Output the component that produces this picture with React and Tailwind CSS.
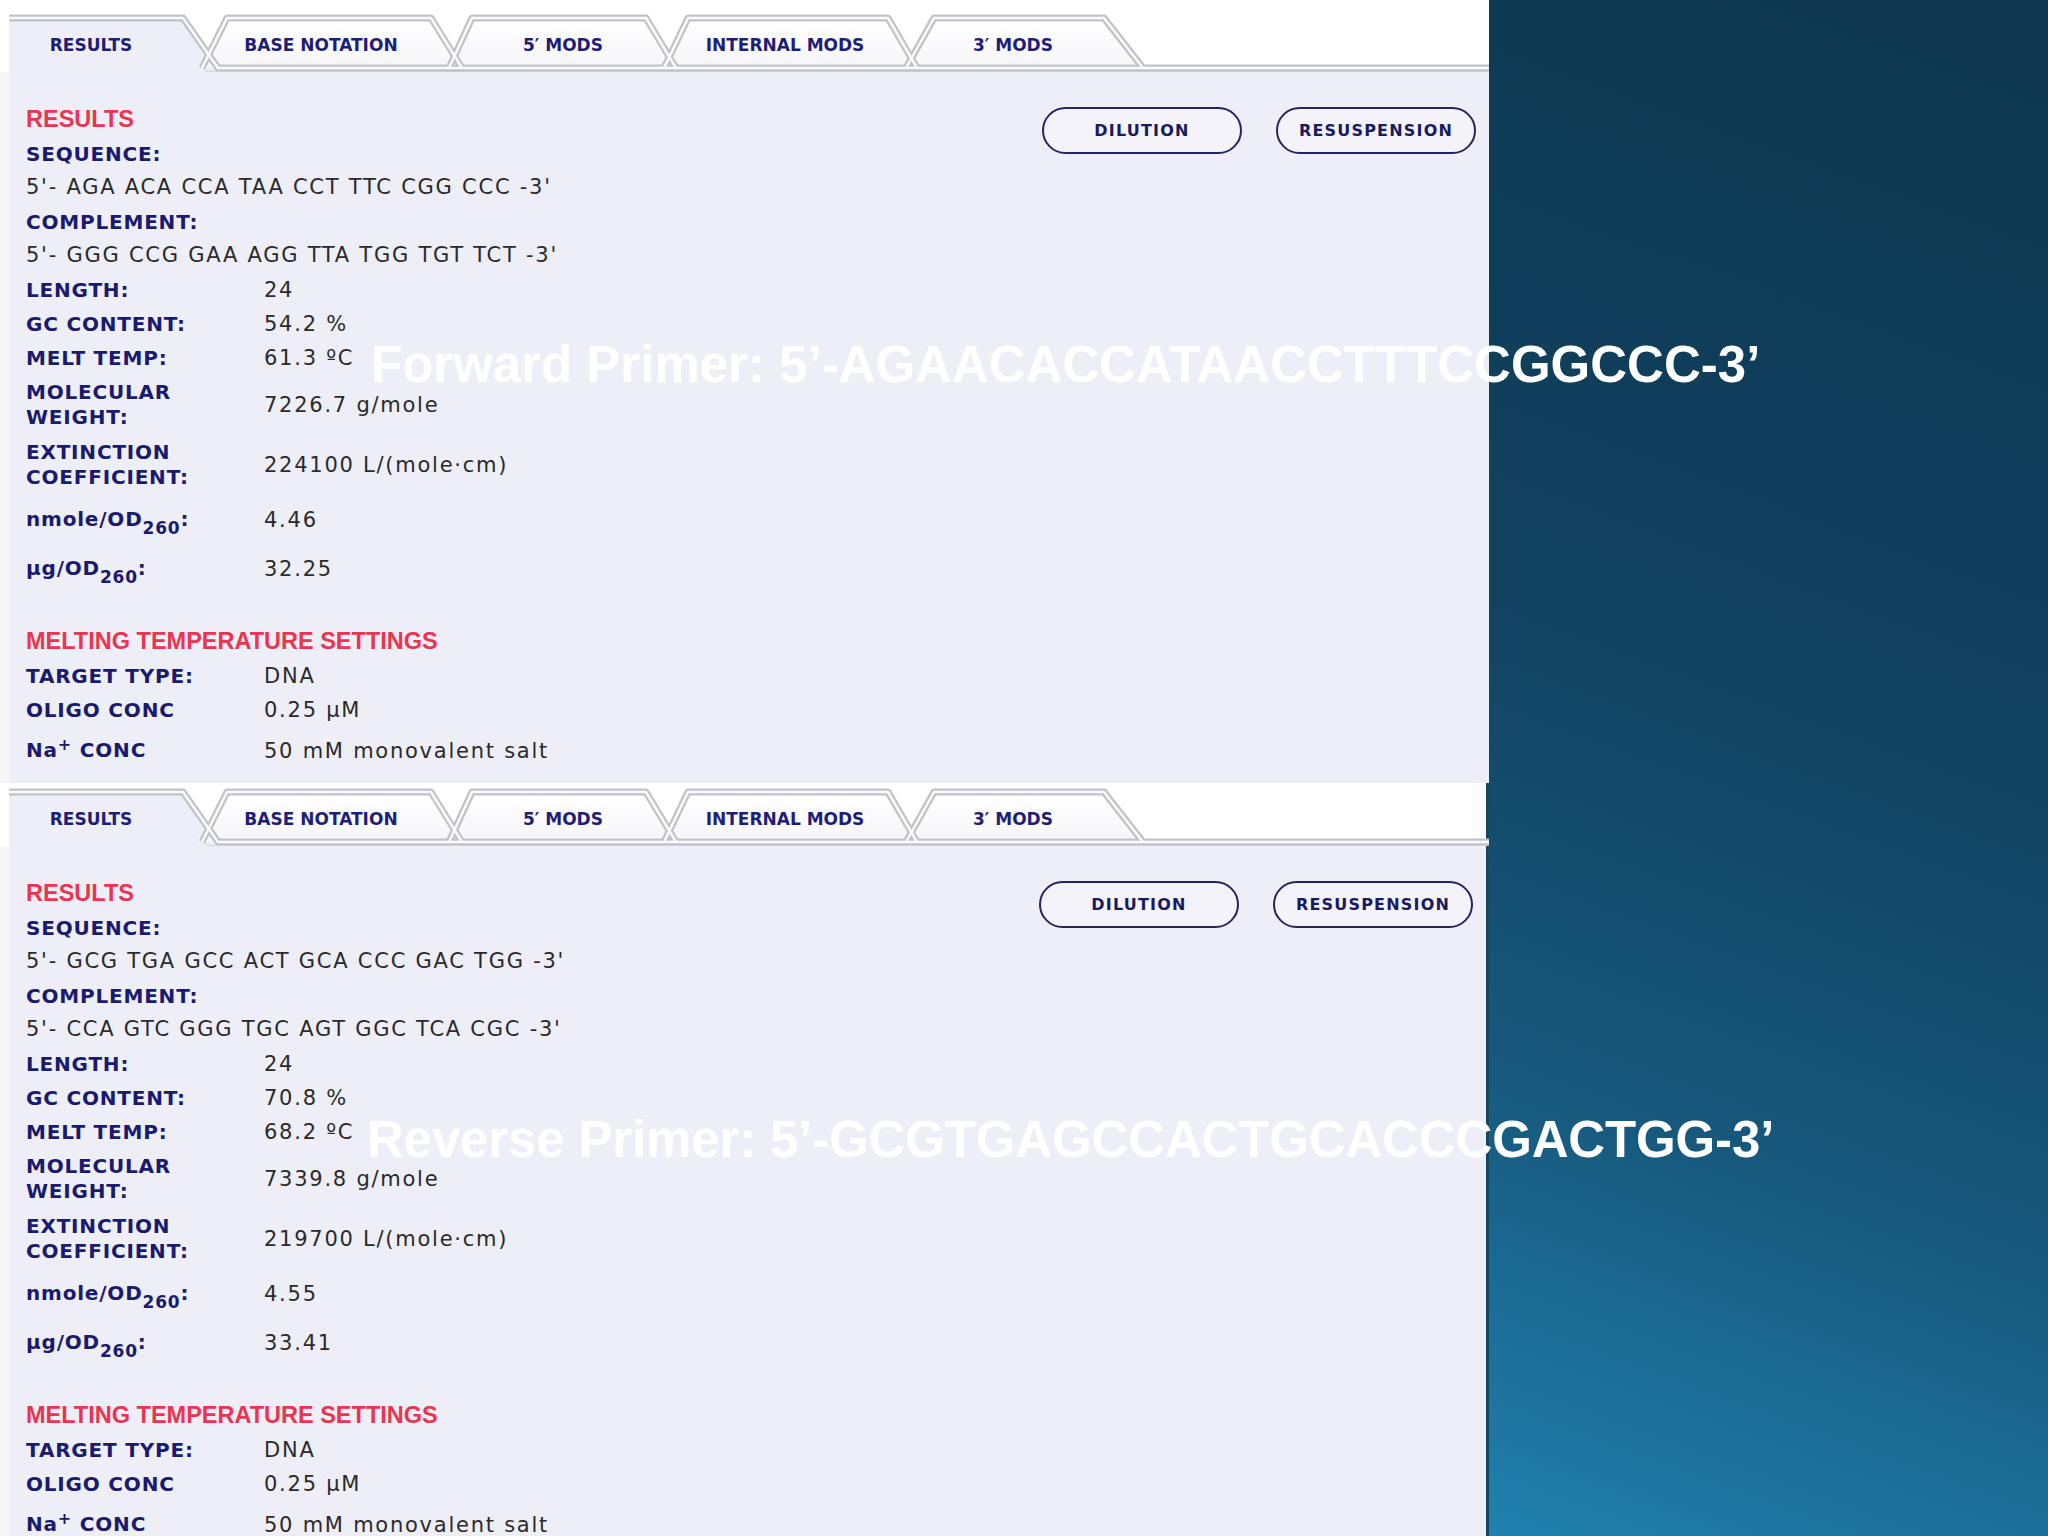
const primers = [
  {
    title: 'Forward Primer: 5’-AGAACACCATAACCTTTCCGGCCC-3’',
    titlePos: 'left-[371px] top-[339px]',
    seq: "5'- AGA ACA CCA TAA CCT TTC CGG CCC -3'",
    comp: "5'- GGG CCG GAA AGG TTA TGG TGT TCT -3'",
    length: '24',
    gc: '54.2 %',
    tm: '61.3 ºC',
    mw: '7226.7 g/mole',
    ext: '224100 L/(mole·cm)',
    nmole: '4.46',
    ug: '32.25',
    width: 'w-[1489px]',
  },
  {
    title: 'Reverse Primer: 5’-GCGTGAGCCACTGCACCCGACTGG-3’',
    titlePos: 'left-[367px] top-[1114px] tracking-[-0.15px]',
    seq: "5'- GCG TGA GCC ACT GCA CCC GAC TGG -3'",
    comp: "5'- CCA GTC GGG TGC AGT GGC TCA CGC -3'",
    length: '24',
    gc: '70.8 %',
    tm: '68.2 ºC',
    mw: '7339.8 g/mole',
    ext: '219700 L/(mole·cm)',
    nmole: '4.55',
    ug: '33.41',
    width: 'w-[1486px]',
  },
];

const tabs = [
  { label: 'RESULTS', w: 'w-[164px] ml-[9px]' },
  { label: 'BASE NOTATION', w: 'w-[296px]' },
  { label: '5′ MODS', w: 'w-[188px]' },
  { label: 'INTERNAL MODS', w: 'w-[256px]' },
  { label: '3′ MODS', w: 'w-[200px]' },
];

const verdana = "font-[family-name:'DejaVu_Sans',Verdana,sans-serif]";
const arial = "font-[family-name:'Liberation_Sans',Arial,sans-serif]";

function TabStrip() {
  const inactive = [
    'M202,59 L227,9 L431,9 L462,59',
    'M449,59 L472,9 L646,9 L676,59',
    'M664,59 L688,9 L888,9 L917,59',
    'M906,59 L934,9 L1104,9 L1143,59',
  ];
  return (
    <div className="relative h-[63px] bg-white">
      <svg className="absolute inset-0" width="1489" height="63" viewBox="0 0 1489 63">
        <defs>
          <linearGradient id="tabfill" x1="0" y1="0" x2="0" y2="1">
            <stop offset="0" stopColor="#ffffff" />
            <stop offset="1" stopColor="#f6f6fa" />
          </linearGradient>
        </defs>
        <polygon points="9,9 183,9 218,59 218,63 9,63" fill="#eeeef6" />
        {inactive.map((d) => (
          <path key={d} d={d + ' Z'} fill="url(#tabfill)" stroke="none" />
        ))}
        <line x1="205" y1="62.5" x2="1489" y2="62.5" stroke="#d6d6de" strokeWidth="1.5" />
        {inactive.map((d) => (
          <path key={'o' + d} d={d} fill="none" stroke="#c2c2c9" strokeWidth="7" strokeLinejoin="round" />
        ))}
        <path d="M9,9 L183,9 L218,59 L1489,59" fill="none" stroke="#c2c2c9" strokeWidth="7" strokeLinejoin="round" />
        {inactive.map((d) => (
          <path key={'i' + d} d={d} fill="none" stroke="#fbfbfd" strokeWidth="2.5" strokeLinejoin="round" />
        ))}
        <path d="M9,9 L183,9 L218,59 L1489,59" fill="none" stroke="#fbfbfd" strokeWidth="2.5" strokeLinejoin="round" />
      </svg>
      <div className="relative flex h-full items-center pt-[10px]">
        {tabs.map((t) => (
          <div
            key={t.label}
            className={`${t.w} flex justify-center text-[17px] font-bold text-[#1e1e78] ${verdana}`}
          >
            {t.label}
          </div>
        ))}
      </div>
    </div>
  );
}

function Row({ label, value, h = 'h-[34px]' }) {
  return (
    <div className={`grid grid-cols-[238px_1fr] items-center ${h}`}>
      <div className={`text-[20px] font-bold leading-[25px] tracking-[0.8px] text-[#1a1a6e] ${verdana}`}>{label}</div>
      <div className={`text-[21px] leading-[25px] tracking-[1.75px] text-[#2a2a2a] ${verdana}`}>{value}</div>
    </div>
  );
}

function Heading({ children, extra = '' }) {
  return (
    <div className={`flex h-[34px] items-center text-[23.5px] font-bold text-[#ea3550] ${arial} ${extra}`}>
      {children}
    </div>
  );
}

function FullLine({ children, bold }) {
  return (
    <div
      className={`flex h-[34px] items-center ${verdana} ${
        bold
          ? 'text-[20px] font-bold tracking-[0.8px] text-[#1a1a6e]'
          : 'text-[21px] tracking-[1.75px] text-[#2a2a2a]'
      }`}
    >
      {children}
    </div>
  );
}

function Sub({ children }) {
  return <span className="relative top-[8px] text-[17px]">{children}</span>;
}

function Panel({ p }) {
  return (
    <div className={`${p.width} h-[774px] shrink-0 flex flex-col`}>
      <TabStrip />
      <div className="flex flex-1">
        <div className="w-[9px] bg-[#f7f7fb]" />
        <div className="flex flex-1 justify-between bg-[#eeeef6]">
          <div className="pl-[17px] pt-[31px] w-[700px]">
            <Heading>RESULTS</Heading>
            <FullLine bold>SEQUENCE:</FullLine>
            <FullLine>{p.seq}</FullLine>
            <FullLine bold>COMPLEMENT:</FullLine>
            <FullLine>{p.comp}</FullLine>
            <Row label="LENGTH:" value={p.length} />
            <Row label="GC CONTENT:" value={p.gc} />
            <Row label="MELT TEMP:" value={p.tm} />
            <Row
              h="h-[60px]"
              label={
                <>
                  MOLECULAR
                  <br />
                  WEIGHT:
                </>
              }
              value={p.mw}
            />
            <Row
              h="h-[60px]"
              label={
                <>
                  EXTINCTION
                  <br />
                  COEFFICIENT:
                </>
              }
              value={p.ext}
            />
            <Row
              h="h-[50px]"
              label={
                <>
                  nmole/OD<Sub>260</Sub>:
                </>
              }
              value={p.nmole}
            />
            <Row
              h="h-[48px]"
              label={
                <>
                  µg/OD<Sub>260</Sub>:
                </>
              }
              value={p.ug}
            />
            <Heading extra="mt-[32px]">MELTING TEMPERATURE SETTINGS</Heading>
            <Row label="TARGET TYPE:" value="DNA" />
            <Row label="OLIGO CONC" value="0.25 µM" />
            <Row
              h="h-[48px]"
              label={
                <>
                  Na<span className="relative -top-[7px] text-[16px]">+</span> CONC
                </>
              }
              value="50 mM monovalent salt"
            />
          </div>
          <div className="flex items-start gap-[34px] pr-[13px] pt-[35px]">
            {['DILUTION', 'RESUSPENSION'].map((b) => (
              <button
                key={b}
                className={`flex h-[47px] w-[200px] items-center justify-center rounded-full border-2 border-[#25255f] bg-[#f3f3f9] text-[16px] font-bold tracking-[1.2px] text-[#1a1a5e] ${verdana}`}
              >
                {b}
              </button>
            ))}
          </div>
        </div>
      </div>
    </div>
  );
}

export default function App() {
  return (
    <div className="relative flex h-[1536px] w-[2048px] overflow-hidden bg-[#15475f]">
      <div className="flex w-[1489px] shrink-0 flex-col">
        <div className="h-[9px] w-full shrink-0 bg-white" />
        {primers.map((p) => (
          <Panel key={p.title} p={p} />
        ))}
      </div>
      <div className="flex-1 bg-[linear-gradient(200deg,#0e3750_0%,#114260_45%,#17577b_72%,#2080ae_100%)]" />
      {primers.map((p) => (
        <div
          key={'t' + p.title}
          className={`absolute ${p.titlePos} whitespace-nowrap text-[51px] font-bold leading-none text-white ${arial}`}
        >
          {p.title}
        </div>
      ))}
    </div>
  );
}
